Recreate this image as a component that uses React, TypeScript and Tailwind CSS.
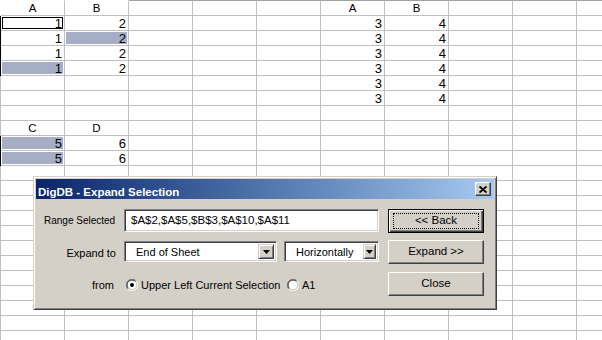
import clsx from "clsx";

const ROWS = 23;
const COLS = 10;

const values: Record<string, string> = {
  "0-0": "A",
  "0-1": "B",
  "0-5": "A",
  "0-6": "B",
  "8-0": "C",
  "8-1": "D",
  "9-0": "5",
  "9-1": "6",
  "10-0": "5",
  "10-1": "6",
};
for (let r = 1; r <= 4; r++) {
  values[`${r}-0`] = "1";
  values[`${r}-1`] = "2";
}
for (let r = 1; r <= 6; r++) {
  values[`${r}-5`] = "3";
  values[`${r}-6`] = "4";
}

const headers = new Set(["0-0", "0-1", "0-5", "0-6", "8-0", "8-1"]);
const selected = new Set(["2-1", "4-0", "9-0", "10-0"]);
const darkLeft = new Set([1, 2, 3, 4, 9, 10]);

function Cell({ r, c }: { r: number; c: number }) {
  const key = `${r}-${c}`;
  const v = values[key];
  const isHeader = headers.has(key);
  return (
    <div
      className={clsx(
        "relative w-[64px] h-[15px] shrink-0 border-r border-b border-r-[#c0c0c0] border-b-[#c0c0c0]",
        r === 0 && "h-[16px] border-t",
        r === 0 && c < 2 && "border-t-white",
        r === 0 && c >= 2 && "border-t-[#a0a0a0]"
      )}
    >
      {selected.has(key) && <div className="absolute inset-[1px] bg-[#a6aec6]" />}
      {key === "1-0" && <div className="absolute inset-[1px] border border-black" />}
      {v && (
        <div
          className={clsx(
            "relative",
            isHeader
              ? "text-center text-[11.5px] leading-[14px]"
              : "text-right pr-[2px] text-[13px] leading-[15px]"
          )}
        >
          {v}
        </div>
      )}
    </div>
  );
}

function DropButton({ w }: { w: string }) {
  return (
    <div
      className={clsx(
        "h-full flex items-center justify-center bg-[#d4d0c8] border border-t-[#d4d0c8] border-l-[#d4d0c8] border-r-[#404040] border-b-[#404040] shadow-[inset_1px_1px_0_#fff,inset_-1px_-1px_0_#808080]",
        w
      )}
    >
      <svg width="7" height="4" viewBox="0 0 7 4">
        <path d="M0 0H7L3.5 4Z" fill="black" />
      </svg>
    </div>
  );
}

function Radio({ checked }: { checked?: boolean }) {
  return (
    <svg width="12" height="12" viewBox="0 0 12 12" className="shrink-0">
      <path d="M10.24 1.76A6 6 0 0 0 1.76 10.24" stroke="#808080" fill="none" />
      <path d="M1.76 10.24A6 6 0 0 0 10.24 1.76" stroke="#ffffff" fill="none" />
      <path d="M9.54 2.46A5 5 0 0 0 2.46 9.54" stroke="#404040" fill="none" />
      <path d="M2.46 9.54A5 5 0 0 0 9.54 2.46" stroke="#d4d0c8" fill="none" />
      <circle cx="6" cy="6" r="4" fill="#fff" />
      {checked && <circle cx="6" cy="6" r="2" fill="#000" />}
    </svg>
  );
}

function Button({ label, isDefault }: { label: string; isDefault?: boolean }) {
  return (
    <div
      className={clsx(
        "relative w-[96px] h-[24px] flex items-center justify-center bg-[#d4d0c8] text-[11.5px]",
        isDefault
          ? "border border-black shadow-[inset_1px_1px_0_#fff,inset_-1px_-1px_0_#404040,inset_-2px_-2px_0_#808080]"
          : "border border-t-white border-l-white border-r-[#404040] border-b-[#404040] shadow-[inset_-1px_-1px_0_#808080]"
      )}
    >
      {isDefault && <div className="absolute left-[4px] right-[4px] top-[3px] bottom-[3px] border border-dotted border-black" />}
      <span className="relative">{label}</span>
    </div>
  );
}

const sunken =
  "border border-t-[#808080] border-l-[#808080] border-r-white border-b-white shadow-[inset_1px_1px_0_#404040,inset_-1px_-1px_0_#d4d0c8] bg-white";

export default function App() {
  return (
    <div
      className="relative w-[602px] h-[340px] overflow-hidden bg-white text-black"
      style={{ fontFamily: '"Liberation Sans", Arial, sans-serif' }}
    >
      <div className="flex flex-col">
        {Array.from({ length: ROWS }).map((_, r) => (
          <div
            key={r}
            className={clsx(
              "flex border-l",
              r === 0 ? "border-l-white" : darkLeft.has(r) ? "border-l-black" : "border-l-[#c0c0c0]"
            )}
          >
            {Array.from({ length: COLS }).map((_, c) => (
              <Cell key={c} r={r} c={c} />
            ))}
          </div>
        ))}
      </div>

      <div className="absolute left-[33px] top-[176px] w-[464px] h-[134px] p-[2px] bg-[#d4d0c8] border border-t-[#d4d0c8] border-l-[#d4d0c8] border-r-[#404040] border-b-[#404040] shadow-[inset_1px_1px_0_#fff,inset_-1px_-1px_0_#808080]">
        <div className="h-[20px] flex items-start justify-between pl-[2px] pr-[3px] bg-gradient-to-r from-[#0a246a] to-[#a6caf0]">
          <span className="mt-[7px] text-[11.5px] leading-[12px] font-bold text-white">DigDB - Expand Selection</span>
          <div className="mt-[3px] w-[16px] h-[14px] flex items-center justify-center bg-[#d4d0c8] border border-t-white border-l-white border-r-[#404040] border-b-[#404040] shadow-[inset_-1px_-1px_0_#808080]">
            <svg width="8" height="7" viewBox="0 0 8 7">
              <path d="M0.5 0.5L7.5 6.5M7.5 0.5L0.5 6.5" stroke="black" strokeWidth="1.8" />
            </svg>
          </div>
        </div>

        <div className="flex pl-[8px] pt-[10px] gap-[9px]">
          <div className="flex flex-col">
            <div className="flex items-center h-[23px]">
              <div className="w-[80px] text-[10px]">Range Selected</div>
              <div className={clsx("w-[255px] h-full flex items-center pl-[6px] text-[11.5px]", sunken)}>
                $A$2,$A$5,$B$3,$A$10,$A$11
              </div>
            </div>
            <div className="flex items-center h-[21px] mt-[9px] text-[11px]">
              <div className="w-[80px] text-right pr-[8px] pt-[3px]">Expand to</div>
              <div className={clsx("w-[153px] h-full flex items-center justify-between p-[2px]", sunken)}>
                <span className="pl-[9px] pt-[2px]">End of Sheet</span>
                <DropButton w="w-[16px]" />
              </div>
              <div className={clsx("ml-[7px] w-[95px] h-full flex items-center justify-between p-[2px]", sunken)}>
                <span className="pl-[9px] pt-[2px]">Horizontally</span>
                <DropButton w="w-[13px]" />
              </div>
            </div>
            <div className="flex items-center h-[20px] mt-[13px] text-[11px]">
              <div className="w-[80px] text-right pr-[10px]">from</div>
              <div className="ml-[2px]">
                <Radio checked />
              </div>
              <span className="ml-[3px] w-[146px]">Upper Left Current Selection</span>
              <Radio />
              <span className="ml-[3px]">A1</span>
            </div>
          </div>
          <div className="flex flex-col">
            <Button label="<< Back" isDefault />
            <div className="mt-[7px]">
              <Button label="Expand >>" />
            </div>
            <div className="mt-[8px]">
              <Button label="Close" />
            </div>
          </div>
        </div>
      </div>
    </div>
  );
}
